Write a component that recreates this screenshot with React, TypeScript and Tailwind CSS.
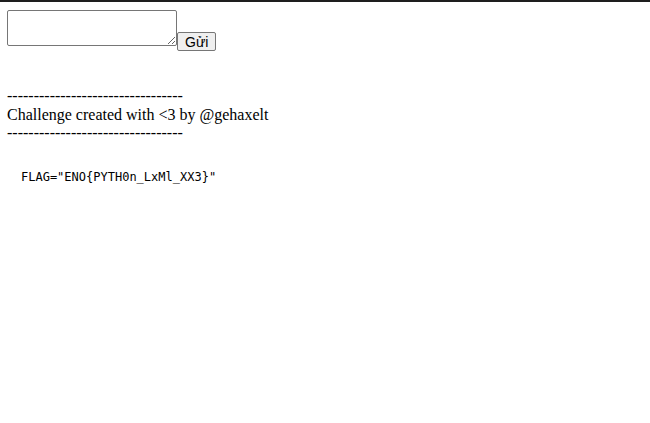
import React from 'react';

export default function App() {
  return (
    <div className="min-h-[423px] w-full bg-white border-t-2 border-[#1e1e1e] font-['Liberation_Serif',serif] text-[16px] text-black">
      <div className="pl-[7px] pt-[8px]">
        {/* Form */}
        <div className="flex items-start">
          <textarea className="w-[170px] h-[36px] border border-[#767676] rounded-[2px] bg-white resize-y p-[2px] text-[13px] font-['Liberation_Mono',monospace]" />
          <button className="mt-[22px] h-[19px] px-[7px] border border-[#767676] rounded-[2px] bg-[#efefef] text-[14px] leading-[16px] font-['Liberation_Sans',sans-serif] text-black">
            Gửi
          </button>
        </div>

        {/* Credits */}
        <div className="mt-[36px] leading-[18.5px]">
          <div>---------------------------------</div>
          <div>Challenge created with &lt;3 by @gehaxelt</div>
          <div>---------------------------------</div>
        </div>

        {/* Flag */}
        <pre className="mt-[27px] ml-[14px] font-['DejaVu_Sans_Mono',monospace] text-[12px] leading-[15px]">
          FLAG="ENO{'{'}PYTH0n_LxMl_XX3{'}'}"
        </pre>
      </div>
    </div>
  );
}
